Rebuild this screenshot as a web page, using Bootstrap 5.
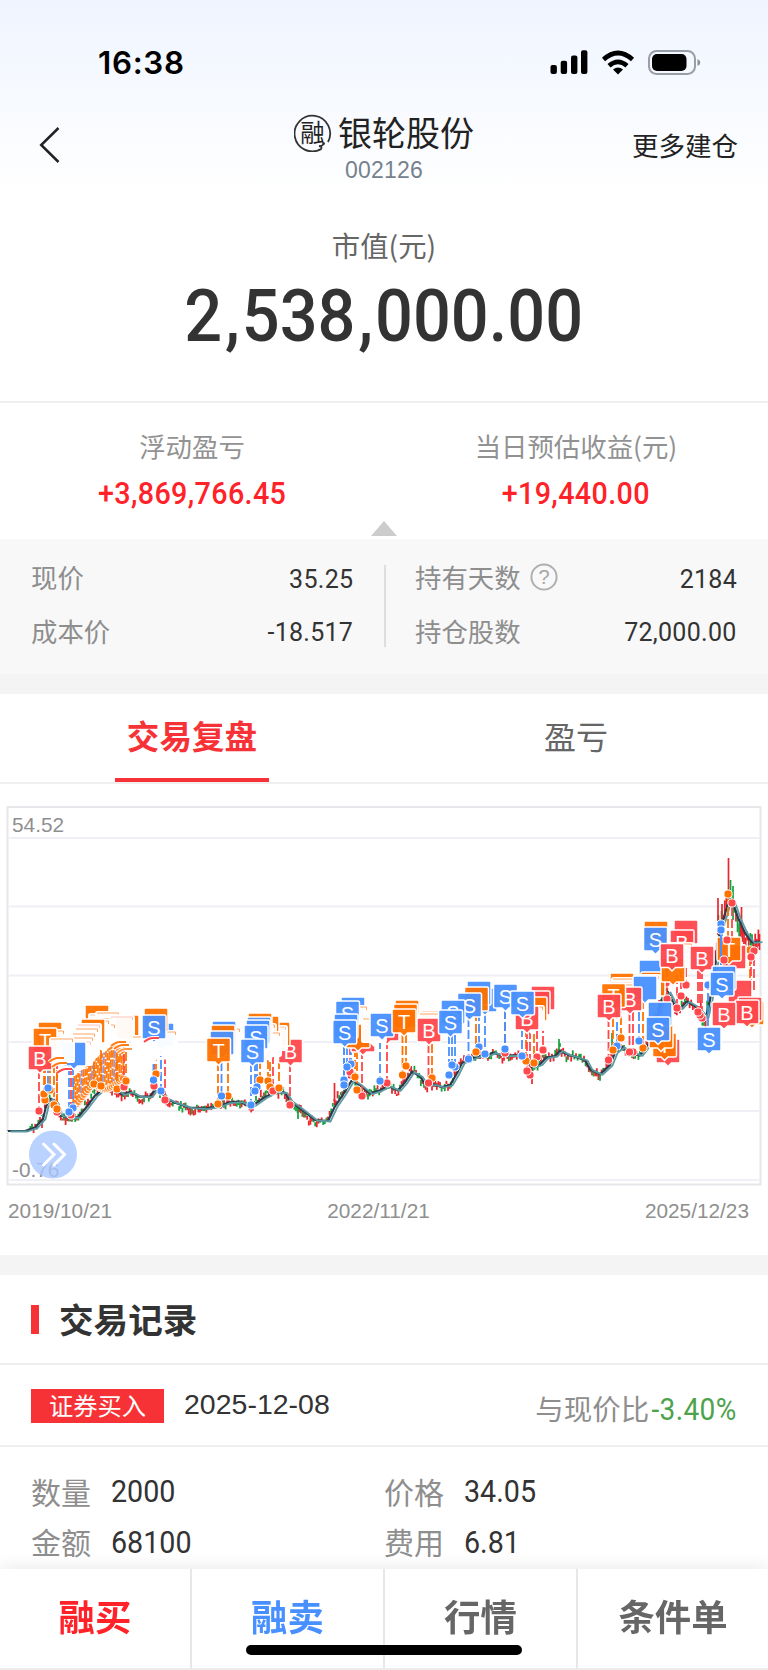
<!DOCTYPE html>
<html lang="zh-CN">
<head>
  <meta charset="UTF-8" />
  <meta name="viewport" content="width=device-width, initial-scale=1.0"/>
  <title>银轮股份 002126</title>
  <link href="https://cdn.jsdelivr.net/npm/bootstrap@5.3.3/dist/css/bootstrap.min.css" rel="stylesheet" />
  <style>
    body {
      font-family: "Noto Sans CJK SC", sans-serif;
      color: #333;
      height: 1670px;
      overflow: hidden;
      background: #fff;
    }
    .top-area { height: 193px; background: linear-gradient(180deg, #f0f4ff 0, #f3f7ff 50px, #fff 100%); }
    .status-bar { height: 105px; padding: 19px 66px 0 98px; color: #000; }
    .status-bar svg { margin-top: 29px; }
    .clock { font: 600 31.3px/40px Inter, sans-serif; letter-spacing: .7px; }
    .title-bar { height: 88px; padding: 0 30px; }
    .title-side { width: 150px; }
    .back-icon { margin: 5px 0 0 8px; }
    .more-link { font-size: 26.5px; line-height: 34px; color: #222; margin-top: 23px; }
    .stock-name { font-size: 34px; line-height: 40px; color: #222; padding-top: 7px; }
    .stock-name svg { margin: 2px 6px 0 0; }
    .stock-code { font: 23px/26px "Liberation Sans", sans-serif; letter-spacing: .2px; color: #75828d; margin-top: 5px; }

    /* condensed digits */
    .din { font-family: Roboto, sans-serif; display: inline-block; transform: scaleX(.94); white-space: nowrap; letter-spacing: .2px; }
    .din-end { transform-origin: right center; }
    .din-start { transform-origin: left center; }

    .market-box { height: 210px; padding-top: 33px; border-bottom: 2px solid #efefef; }
    .market-label { font-size: 28.4px; line-height: 38px; color: #666; }
    .market-value { font-size: 72.5px; line-height: 105px; font-weight: 500; letter-spacing: 0; transform: scaleX(.92); }
    .market-value span { margin: 0 2px 0 3px; }
    .profit-row { height: 136px; padding-top: 27px; }
    .profit-label { font-size: 26.4px; line-height: 32px; color: #929292; }
    .profit-value { font-size: 30.5px; line-height: 63px; font-weight: 500; letter-spacing: .4px; color: #ff2229; }
    .fold-arrow { left: 371px; top: 118px; width: 26px; }

    .detail-box { height: 135px; background: #f8f8f8; padding: 13px 32px 0 31px; }
    .detail-col { width: 321px; }
    .detail-line { height: 53.5px; font-size: 26.4px; color: #8e8e8e; }
    .detail-line > span:first-child { margin-top: -3px; }
    .detail-line svg { margin-left: 9px; }
    .detail-line .din { font-size: 26.6px; color: #333; letter-spacing: .3px; margin-right: -1px; }
    .detail-rule { width: 2px; height: 82px; margin: 13px 29px 0 32px; background: #dedede; }
    .gap-band { height: 20px; background: #f4f4f4; }

    .tab-row { height: 90px; border-bottom: 2px solid #efefef; }
    .tab-item { font-size: 32px; line-height: 82px; color: #666; }
    .tab-item.on { font-size: 32.6px; font-weight: 700; color: #f73237; }
    .tab-item.on::after { content: ""; display: block; width: 154px; height: 4px; margin: 2px auto 0; background: #f73237; }

    .chart-box { height: 471px; }
    .chart-box svg { display: block; }
    .chart-dates { font: 20.8px/26px "Liberation Sans", sans-serif; color: #8f8f8f; padding: 1px 19px 0 8px; }

    .log-head { height: 90px; border-bottom: 2px solid #efefef; padding-left: 31px; }
    .log-head i { width: 8px; height: 29px; margin-right: 20px; background: #f73237; }
    .log-head b { font-size: 34.6px; line-height: 40px; margin-top: -3px; }
    .log-line { height: 82px; border-bottom: 2px solid #efefef; padding: 0 32px 0 31px; }
    .side-tag { width: 133px; height: 34px; font-size: 24.3px; line-height: 31px; color: #fff; background: #f73237; margin-top: 2px; }
    .log-date { font: 28.5px/34px "Liberation Sans", sans-serif; margin: -3px 0 0 20px; }
    .log-ratio { font-size: 28.5px; line-height: 40px; color: #8e8e8e; padding-top: 7px; margin-right: -1px; }
    .log-ratio .din { font-size: 30.5px; color: #4da24d; transform: scaleX(.92); margin-left: -5px; letter-spacing: .4px; }
    .log-grid { padding: 20px 0 0 31px; font-size: 30px; line-height: 40px; color: #8e8e8e; }
    .log-cell { width: 353px; height: 50.5px; padding-bottom: 3px; }
    .log-cell .din { font-size: 31px; color: #333; margin: 3px 0 0 20px; transform: scaleX(.925); letter-spacing: 0; }

    .trade-nav { height: 101px; background: #fff; border-bottom: 2px solid #ececec; box-shadow: 0 -4px 14px rgba(0,0,0,.07); }
    .nav-cell { width: 193px; font-size: 36.4px; line-height: 92px; font-weight: 700; color: #666; border-right: 2px solid #e7e7e7; }
    .nav-cell:first-child { width: 192px; }
    .nav-cell:nth-child(4) { width: 190px; border-right: 0; }
    .nav-cell.buy { color: #ff2329; }
    .nav-cell.sell { color: #4890ff; }
    .home-bar { left: 246px; bottom: 13px; width: 276px; height: 10px; border-radius: 5px; background: #000; }
  </style>
</head>
<body>
<div class="top-area">
  <div class="status-bar d-flex justify-content-between">
    <div class="clock pt-4">16:38</div>
    <svg width="153" height="28" viewBox="549 48 153 28">
      <rect x="550.5" y="65" width="6.4" height="9" rx="2"/>
      <rect x="560.7" y="60.7" width="6.4" height="13.3" rx="2"/>
      <rect x="571" y="55.4" width="6.4" height="18.6" rx="2"/>
      <rect x="581" y="50.3" width="6.4" height="23.7" rx="2"/>
      <g fill="none" stroke="#000" stroke-width="4.6">
        <path d="M603.5 59.5Q618 46.5 632.5 59.5"/>
        <path d="M609 65.8Q618 58 627 65.8"/>
      </g>
      <path d="M613 69.5Q618 65.5 623 69.5L618 74.4Z"/>
      <rect x="649" y="51" width="46" height="23" rx="7.5" fill="none" stroke="#999da6" stroke-width="2"/>
      <rect x="652" y="54" width="34.5" height="17" rx="5"/>
      <path d="M697.5 59q2.8 1.3 2.8 3.5t-2.8 3.5z" fill="#8b8e96"/>
    </svg>
  </div>
  <div class="title-bar d-flex justify-content-between">
    <div class="title-side pt-3">
      <svg class="back-icon" width="24" height="38" viewBox="0 0 24 38"><path d="M20.5 2L3.2 19L20.5 36" fill="none" stroke="#222" stroke-width="2.5"/></svg>
    </div>
    <div class="text-center">
      <div class="stock-name d-flex align-items-center">
        <svg width="38" height="38" viewBox="0 0 38 38">
          <path d="M30 28.5V30Q28 32.3 25 32Q28.5 32.5 27 35.1A17.8 17.8 0 1 1 34 28" fill="none" stroke="#333" stroke-width="1.8"/>
          <text x="18.5" y="27.5" font-size="24.5" text-anchor="middle" fill="#222">融</text>
        </svg>银轮股份
      </div>
      <div class="stock-code">002126</div>
    </div>
    <div class="title-side text-end"><div class="more-link">更多建仓</div></div>
  </div>
</div>

<div class="market-box text-center">
  <div class="market-label">市值(元)</div>
  <div class="din market-value">2<span>,</span>538<span>,</span>000.00</div>
</div>

<div class="profit-row row g-0 text-center position-relative">
  <div class="col-6">
    <div class="profit-label">浮动盈亏</div>
    <div class="din profit-value">+3,869,766.45</div>
  </div>
  <div class="col-6">
    <div class="profit-label">当日预估收益(元)</div>
    <div class="din profit-value">+19,440.00</div>
  </div>
  <svg class="fold-arrow position-absolute p-0" width="26" height="15" viewBox="0 0 26 15"><path d="M13 0L26 15H0Z" fill="#ccc"/></svg>
</div>

<div class="detail-box d-flex">
  <div class="detail-col">
    <div class="detail-line d-flex align-items-center justify-content-between"><span>现价</span><span class="din din-end">35.25</span></div>
    <div class="detail-line d-flex align-items-center justify-content-between"><span>成本价</span><span class="din din-end">-18.517</span></div>
  </div>
  <div class="detail-rule"></div>
  <div class="detail-col">
    <div class="detail-line d-flex align-items-center justify-content-between">
      <span class="d-flex align-items-center">持有天数
        <svg width="28" height="28" viewBox="0 0 28 28">
          <circle cx="14" cy="14" r="12.6" fill="none" stroke="#b0b0b0" stroke-width="2"/>
          <text x="14" y="21" font-family="Liberation Sans" font-size="20" text-anchor="middle" fill="#a5a5a5">?</text>
        </svg>
      </span>
      <span class="din din-end">2184</span>
    </div>
    <div class="detail-line d-flex align-items-center justify-content-between"><span>持仓股数</span><span class="din din-end">72,000.00</span></div>
  </div>
</div>
<div class="gap-band"></div>

<div class="tab-row row g-0 text-center">
  <div class="col-6 tab-item on">交易复盘</div>
  <div class="col-6 tab-item">盈亏</div>
</div>

<div class="chart-box">
  <svg id="chart" width="768" height="413" viewBox="0 784 768 413"></svg>
  <div class="chart-dates d-flex justify-content-between">
    <span>2019/10/21</span><span>2022/11/21</span><span>2025/12/23</span>
  </div>
</div>
<div class="gap-band"></div>

<div class="log-head d-flex align-items-center"><i></i><b>交易记录</b></div>
<div class="log-line d-flex align-items-center">
  <div class="side-tag text-center">证券买入</div>
  <div class="log-date">2025-12-08</div>
  <div class="log-ratio ms-auto">与现价比<span class="din din-end">-3.40%</span></div>
</div>
<div class="log-grid d-flex flex-wrap">
  <div class="log-cell d-flex align-items-center">数量<span class="din din-start">2000</span></div>
  <div class="log-cell d-flex align-items-center">价格<span class="din din-start">34.05</span></div>
  <div class="log-cell d-flex align-items-center">金额<span class="din din-start">68100</span></div>
  <div class="log-cell d-flex align-items-center">费用<span class="din din-start">6.81</span></div>
</div>

<nav class="trade-nav fixed-bottom d-flex text-center">
  <div class="nav-cell buy">融买</div>
  <div class="nav-cell sell">融卖</div>
  <div class="nav-cell">行情</div>
  <div class="nav-cell">条件单</div>
  <div class="home-bar position-absolute"></div>
</nav>

<script>
  const colors = { B: "#ff474c", S: "#4890ff", T: "#ff7200" };

  // close price path
  const price = [
    [8,1131],[25,1131],[35,1126],[43,1115],[46,1102],[50,1097],[56,1106],[60,1120],[70,1117],[78,1117],[85,1105],[95,1091],
    [105,1086],[115,1091],[122,1096],[130,1090],[140,1100],[150,1095],[155,1087],[160,1091],[166,1102],[175,1103],[190,1110],
    [205,1108],[218,1106],[228,1101],[240,1102],[251,1109],[264,1092],[275,1092],[285,1093],[290,1105],[300,1110],[315,1125],
    [328,1119],[335,1100],[343,1092],[352,1074],[360,1091],[370,1095],[380,1088],[388,1085],[398,1093],[405,1077],[412,1069],
    [420,1080],[426,1088],[434,1083],[442,1089],[450,1083],[456,1071],[462,1059],[468,1061],[478,1054],[488,1056],[493,1051],
    [503,1058],[515,1054],[525,1060],[532,1071],[540,1061],[546,1056],[555,1056],[560,1048],[568,1058],[575,1056],[585,1062],
    [590,1073],[600,1075],[610,1060],[615,1049],[622,1046],[632,1056],[640,1055],[648,1040],[656,1015],[662,992],[668,992],
    [674,1010],[680,1008],[687,998],[697,1012],[706,1020],[710,990],[715,958],[718,932],[722,920],[728,895],[732,903],
    [738,925],[745,937],[752,945],[760,940]
  ];

  // [type, box x, box y, letter shown], back to front
  const pins = [
    ["T",50,1034,0],["w",53,1042],["T",45,1040,1],["T",97,1017,0],["w",101,1026],["w",108,1024],["w",113,1030],["T",127,1027,0],
    ["w",122,1028],["w",104,1036],["w",98,1032],["T",93,1031,0],["w",89,1036],["w",87,1040],["w",84,1045],["w",82,1049],
    ["w",80,1053],["S",74,1054,0],["w",62,1050],["B",40,1058,1],
    ["S",162,1035,0],["w",165,1043],["T",156,1020,0],["w",144,1048],["S",154,1027,1],
    ["w",229,1040],["S",224,1033,0],["T",223,1037,0],["S",222,1043,0],["T",218.5,1050,1],
    ["B",290.5,1051,1],["T",278,1034,0],["w",275,1038],["T",267,1028,0],["w",264,1036],["w",269,1044],["T",260,1025,0],
    ["S",259,1029,0],["S",258,1032,0],["S",256,1037,1],["S",252.5,1051,1],
    ["S",353,1009,0],["w",356,1018],["S",347.5,1013,1],["B",363,1040,0],["T",358,1036,0],["S",346,1026,0],["S",344.7,1032,1],
    ["B",387,1029,0],["w",374,1030],["S",382,1025,1],
    ["T",407,1012,0],["T",405.5,1016,0],["T",404,1021,1],["T",433,1023,0],["w",431,1025],["B",429,1030,1],
    ["S",485,1000,0],["S",479,993,0],["T",476.5,999,0],["S",469.5,1005,1],["S",453,1012,1],["S",450.5,1022,1],
    ["S",505.5,996,1],["B",543,998,0],["B",538,1003,0],["T",535,1009,0],["w",532,1018],["B",527,1018,1],["S",522.5,1003,1],
    ["T",622,985,0],["w",624,990],["w",622,994],["w",628,996],["S",651,972,0],["T",653,984,0],["w",648,987],["S",645,988,0],
    ["B",630,999,1],["T",613.5,995.5,1],["B",609,1006,1],["T",656,933,0],["S",655.5,939,1],
    ["B",686,932,0],["B",682,942,1],["w",681,955],["T",673,970,0],["B",672,955.5,1],["B",702,958,1],
    ["B",668,1051,0],["T",664.5,1045,1],["T",661,1036,0],["S",660,1014,0],["S",658,1029,1],
    ["B",734,957,0],["T",729,949,1],["B",740,992,0],["T",752,1013,0],["B",750,1009,0],["B",747,1012,1],
    ["S",724,978,0],["S",722,984,1],["B",724,1014,1],["S",709,1039,1]
  ];

  // [type, x, y, y of line top]
  const dots = [
    ["B",39,1111,1070],["T",45,1100,1052],["T",44,1094,1052],["T",54,1105,1052],["B",57,1112,1060],["T",57,1109,1070],
    ["T",50,1090,1052],["S",48,1088,1052],
    ["B",71,1115,1066],["S",73,1108,1066],["S",69,1112,1066],["T",94,1084,1050],["T",117,1089,1048],["T",101,1086,1050],
    ["B",124,1087,1042],["T",126,1081,1040],["B",154,1086,1040],["T",156,1074,1040],["S",153.5,1080,1040],
    ["S",161,1091,1048],["B",165,1100,1055],["T",228,1096,1050],["S",221.5,1096,1062],["T",218,1104,1062],
    ["T",260,1080,1060],["S",257,1087,1062],["S",255,1091,1062],["S",251,1105,1063],["T",268,1081,1048],["T",270,1087,1050],
    ["B",273,1091,1055],["T",279,1088,1048],["B",290,1105,1063],["B",350,1072,1046],["S",351,1064,1046],["S",344,1080,1046],
    ["S",347,1067,1046],["S",344,1085,1046],["T",355,1077,1048],["B",362,1096,1050],["T",357,1090,1050],["B",387,1083,1040],
    ["S",380,1081,1040],["T",406,1066,1034],["T",402.5,1075,1034],["T",432,1078,1044],["B",428.5,1083,1044],
    ["S",455,1067,1035],["S",449,1075,1035],["S",452,1065,1035],["S",468.5,1059,1018],["S",479,1047,1012],["T",476,1052,1012],
    ["S",485,1054,1014],["B",505,1053,1010],["S",505,1049,1010],["T",526,1061,1016],["S",522,1056,1016],["B",543,1050,1012],
    ["B",537,1057,1018],["T",534,1063,1022],["B",530,1075,1030],["B",527,1071,1030],["T",621,1038,1004],["S",617,1046,1010],
    ["T",613,1050,1018],["B",608.5,1060,1018],["B",633,1052,1012],["B",629.5,1052,1012],["T",643,1048,1000],
    ["S",639,1041,1000],["T",649,1037,1000],["B",666,983,968],["B",667,999,968],["B",681,996,968],["B",686,985,968],
    ["B",677,1008,975],["B",702,1018,970],["B",700,1015,970],["B",698,1012,970],["S",708,985,1026],
    ["T",728,894,940],["B",732,903,940],["T",750,950,990],["B",754,951,990],["B",751,957,1000]
  ];

  // dots drawn over the flags
  const topDots = [["B",727,940],["S",721,924],["S",721,930],["B",724,960]];

  let out = "";
  const vline = (x, y1, y2, c, w, dash) =>
    `<line x1="${x}" x2="${x}" y1="${y1}" y2="${y2}" stroke="${c}" stroke-width="${w}" ${dash ? `stroke-dasharray="${dash}"` : ""}/>`;
  const dot = (x, y, c) => `<circle cx="${x}" cy="${y}" r="4.1" fill="${c}" stroke="#fff" stroke-width="1"/>`;

  // frame and grid
  out += `<rect x="7.5" y="807" width="753" height="377.5" fill="none" stroke="#e6e6eb" stroke-width="2"/>`;
  [838, 906.5, 975.5, 1042, 1111, 1180].forEach(y => {
    out += `<line x1="8" x2="760" y1="${y}" y2="${y}" stroke="#efeff6" stroke-width="1.8"/>`;
  });
  out += `<g font-family="Liberation Sans" font-size="20.8" fill="#8f8f8f"><text x="12" y="832">54.52</text><text x="12" y="1176.5">-0.76</text></g>`;

  // candles
  let seed = 7;
  const rnd = () => (seed = (seed * 16807) % 2147483647) / 2147483647;
  const priceAt = x => {
    let i = price.findIndex(p => p[0] >= x);
    if (i < 1) i = 1;
    const [a, b] = [price[i - 1], price[i]];
    return a[1] + (b[1] - a[1]) * (x - a[0]) / (b[0] - a[0]);
  };
  for (let x = 8; x < 760; x += 1.6) {
    const y = priceAt(x);
    const k = x < 30 ? .15 : x > 700 ? 2.4 : 1;
    const shift = (rnd() - .5) * 6 * k;
    out += vline(x, y + shift - (.8 + rnd() * 3.6) * k, y + shift + (.8 + rnd() * 3.6) * k, rnd() > .45 ? "#e8262d" : "#14a13c", 1.8);
  }
  [[718,898,935,"B"],[720,920,945,"G"],[722,904,930,"B"],[728.5,858,900,"B"],[730.5,880,900,"G"],[733,886,920,"G"],
   [741.5,907,935,"B"],[334.5,1083,1105,"B"],[559,1039,1050,"G"],[532,1070,1084,"B"],[298,1108,1119,"G"],[42,1120,1128,"B"],
   [612,1033,1050,"G"],[759.5,934,950,"B"]].forEach(([x, a, b, t]) => {
    out += vline(x, a, b, t == "B" ? "#e8262d" : "#14a13c", 1.7);
  });

  // moving averages
  const path = (dx, dy) => price.map((p, i) => {
    const n = price[Math.max(0, i - 1)];
    return `${p[0] + dx},${(p[1] * 2 + n[1]) / 3 + dy}`;
  }).join(" ");
  out += `<polyline points="${path(0, 0)}" fill="none" stroke="#2c3a4b" stroke-width="2.2" stroke-linejoin="round"/>`;
  out += `<polyline points="${path(2.5, .5)}" fill="none" stroke="#5d9ba3" stroke-width="1.8" stroke-linejoin="round"/>`;

  // dense run of T trades on the left
  const run = [];
  for (let i = 0; i < 28; i++) {
    run.push([73 + i * 1.85, i < 11 ? 1109 - i * 2.4 : 1083 + Math.sin((i - 11) / 4) * 6, 1076 - i * 1.5]);
  }
  run.forEach(([x, low]) => {
    out += `<circle cx="${x}" cy="${low}" r="3.8" fill="#ff7d16" fill-opacity=".75" stroke="#fff" stroke-width=".9"/>`;
  });
  run.forEach(([x, low, top], i) => {
    out += `<line x1="${x + 1.5}" x2="${x}" y1="${top}" y2="${low - 4}" stroke="${i % 6 == 4 ? "#9a94d8" : "#ff7d16"}" stroke-width="1.9" stroke-dasharray="${6 + rnd() * 4} 1.6" stroke-dashoffset="${rnd() * 9}"/>`;
  });
  out += `<path d="M60 1030L76 1022L82 1010L122 1004L133 1018V1039L117 1040L108 1046L90 1062L80 1069L66 1070L60 1062Z" fill="#fff"/>`;

  dots.forEach(([t, x, y, top]) => { out += vline(x, top, y, colors[t], 1.8, "9 3"); });
  dots.forEach(([t, x, y]) => { out += dot(x, y, colors[t]); });

  // flags
  pins.forEach(([t, x, y, show], i) => {
    const l = x - 12, u = y - 12;
    const shape = `M${l + 1.5} ${u}h21q1.5 0 1.5 1.5v21q0 1.5 -1.5 1.5h-7l-3.5 3.5l-3.5 -3.5h-7q-1.5 0 -1.5 -1.5v-21q0 -1.5 1.5 -1.5z`;
    if (t == "w") {
      out += `<path d="${shape}" fill="#fff" fill-opacity=".96" stroke="#fff" stroke-width="2"/>`;
      out += `<path d="M${l + 1} ${u + 1}h21.5v3" fill="none" stroke="${i % 4 ? "#ffa566" : "#ffc4c0"}" stroke-width="1"/>`;
      return;
    }
    out += `<path d="${shape}" fill="${colors[t]}" fill-opacity=".95" stroke="#fff" stroke-width="1.5"/>`;
    if (show) out += `<text x="${x}" y="${y + 7.5}" font-family="Liberation Sans" font-size="20" text-anchor="middle" fill="#fff">${t}</text>`;
  });
  out += vline(721, 930, 965, colors.S, 2);
  topDots.forEach(([t, x, y]) => { out += dot(x, y, colors[t]); });

  // ribbons where the flag tails bunch up
  [[108,1050,"#ff7d16"],[111,1046,"#ff7d16"],[114,1049,"#ff7d16"],[117,1053,"#ff9a4a"],[49,1062,"#ff7d16"],[52,1067,"#ff7d16"],
   [144,1042,"#ff474c"],[57,1073,"#ff474c"]].forEach(([x, y, c]) => {
    out += `<path d="M${x} ${y}q5 -4 9 -4h6" fill="none" stroke="#fff" stroke-width="4"/>`;
    out += `<path d="M${x} ${y}q5 -4 9 -4h6" fill="none" stroke="${c}" stroke-width="1.8"/>`;
  });

  // expand button
  out += `<circle cx="53" cy="1154.5" r="24" fill="#a9c7ff" fill-opacity=".8"/>`;
  out += `<path d="M43.5 1144L54 1154.5L43.5 1165M54 1144L64.5 1154.5L54 1165" fill="none" stroke="#fff" stroke-width="3" stroke-linecap="round"/>`;

  document.getElementById("chart").innerHTML = out;
</script>
<script src="https://cdn.jsdelivr.net/npm/bootstrap@5.3.3/dist/js/bootstrap.bundle.min.js"></script>
</body>
</html>
